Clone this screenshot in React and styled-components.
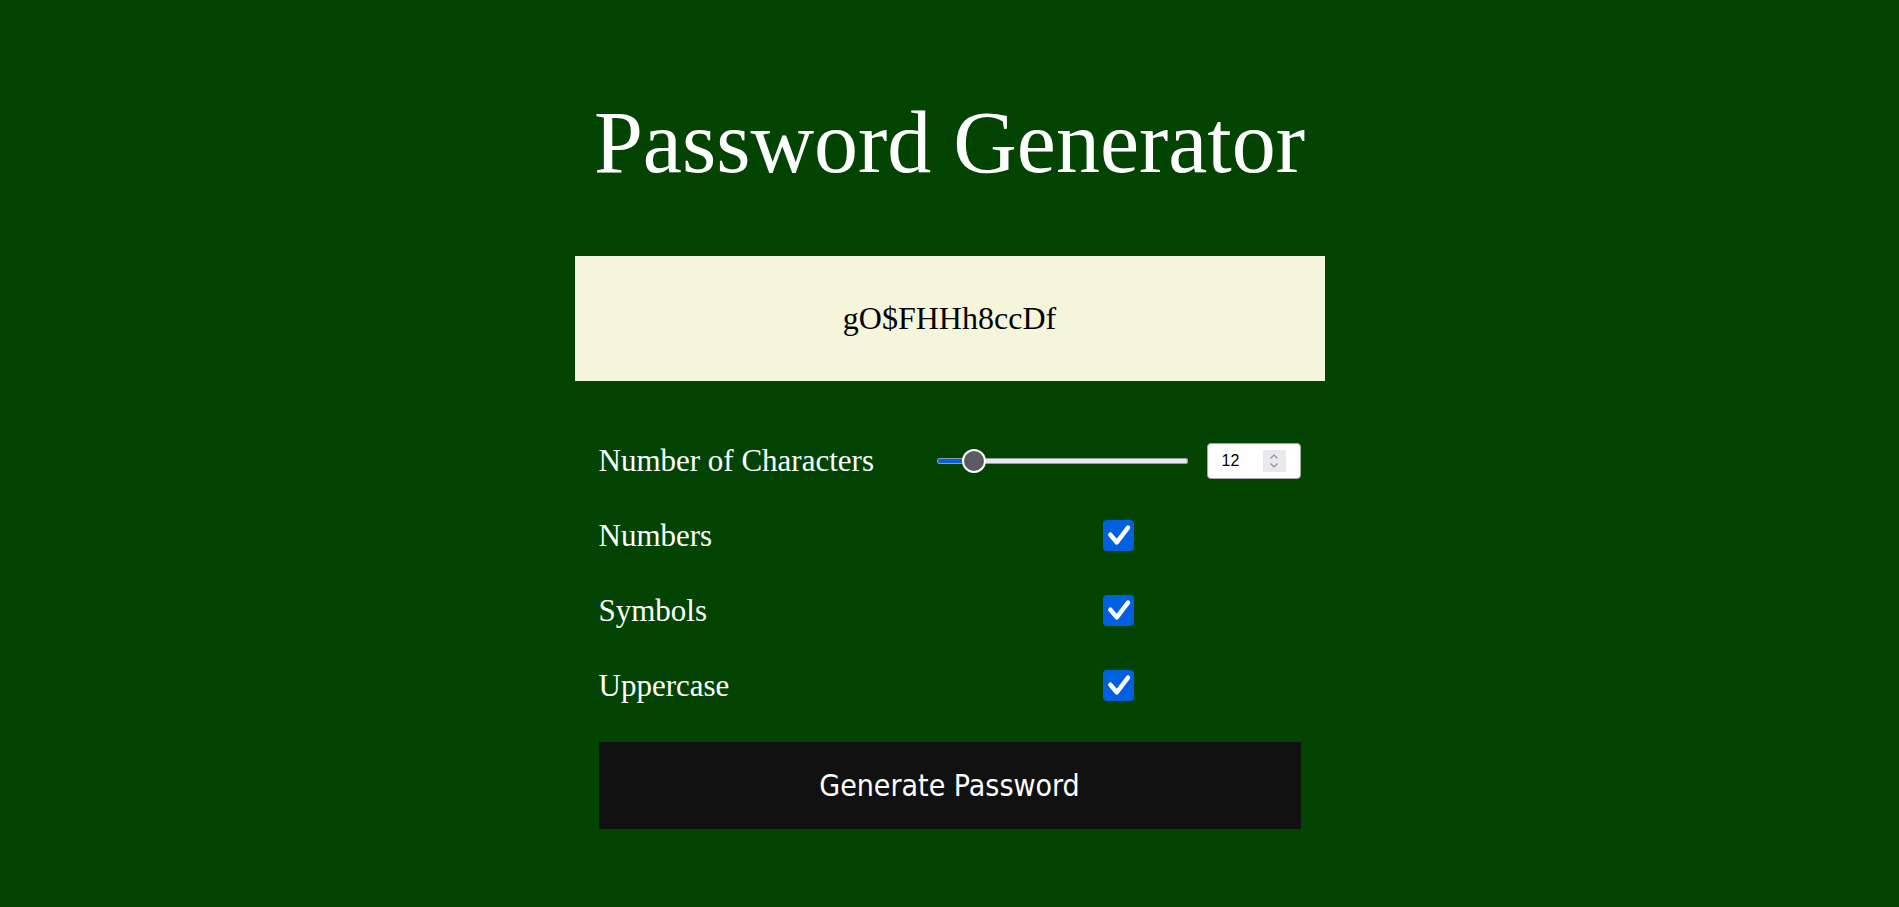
import React, { useState } from 'react';
import styled, { createGlobalStyle } from 'styled-components';

const GlobalStyle = createGlobalStyle`
  html, body {
    margin: 0;
    padding: 0;
  }
  body {
    background: #034403;
    color: #fff;
    font-family: "Liberation Serif", "Times New Roman", serif;
  }
`;

const Page = styled.main`
  min-height: 100vh;
  box-sizing: border-box;
  padding-top: 92px;
  display: flex;
  flex-direction: column;
  align-items: center;
`;

const Title = styled.h1`
  margin: 0;
  font-size: 88px;
  font-weight: 400;
  line-height: 1.15;
  color: #fff;
`;

const Card = styled.section`
  width: 750px;
  margin-top: 63px;
`;

const Output = styled.div`
  height: 125px;
  background: #f5f5dc;
  color: #000;
  font-size: 32px;
  display: flex;
  align-items: center;
  justify-content: center;
`;

const Settings = styled.div`
  margin-top: 57px;
  padding: 0 24px;
  display: flex;
  flex-direction: column;
  gap: 30px;
`;

const Row = styled.div`
  display: grid;
  grid-template-columns: 1fr 364px;
  align-items: center;
  height: 45px;
`;

const Label = styled.span`
  font-size: 31px;
  color: #fff;
`;

const LengthControls = styled.div`
  display: flex;
  align-items: center;
  justify-content: space-between;
`;

const Range = styled.input.attrs({ type: 'range' })`
  -webkit-appearance: none;
  appearance: none;
  width: 251px;
  height: 24px;
  margin: 0;
  background: transparent;

  &::-webkit-slider-runnable-track {
    height: 6px;
    border-radius: 3px;
    box-shadow: inset 0 0 0 1px #9a9aa4;
    background: linear-gradient(
      to right,
      #0060df 0,
      #0060df ${(p) => p.$fill}%,
      #e9e9ed ${(p) => p.$fill}%,
      #e9e9ed 100%
    );
  }

  &::-webkit-slider-thumb {
    -webkit-appearance: none;
    box-sizing: border-box;
    width: 24px;
    height: 24px;
    margin-top: -9px;
    border-radius: 50%;
    background: #5b5b66;
    border: 2px solid #fff;
  }
`;

const NumberBox = styled.div`
  box-sizing: border-box;
  width: 94px;
  height: 36px;
  padding: 0 14px;
  background: #fff;
  border: 1px solid #a6a6ae;
  border-radius: 4px;
  display: flex;
  align-items: center;
`;

const NumberInput = styled.input.attrs({ type: 'number' })`
  flex: 1;
  min-width: 0;
  padding: 0;
  border: none;
  outline: none;
  background: transparent;
  color: #000;
  font: 16px "Liberation Sans", Arial, sans-serif;
  -moz-appearance: textfield;

  &::-webkit-inner-spin-button,
  &::-webkit-outer-spin-button {
    -webkit-appearance: none;
    margin: 0;
  }
`;

const Spin = styled.span`
  width: 23px;
  height: 22px;
  background: #e9e9ed;
  display: flex;
  align-items: center;
  justify-content: center;
`;

const CheckLabel = styled.label`
  justify-self: center;
  display: flex;
  cursor: pointer;
`;

const HiddenCheck = styled.input.attrs({ type: 'checkbox' })`
  position: absolute;
  opacity: 0;
  width: 0;
  height: 0;
  margin: 0;
`;

const CheckBox = styled.span`
  width: 31px;
  height: 31px;
  border-radius: 4px;
  background: ${(p) => (p.$on ? '#0060df' : '#fff')};
  border: ${(p) => (p.$on ? 'none' : '2px solid #8f8f9d')};
  box-sizing: border-box;
  display: flex;
  align-items: center;
  justify-content: center;
`;

const GenerateButton = styled.button`
  display: block;
  width: 702px;
  height: 87px;
  margin: 34px 24px 0;
  border: none;
  background: #111;
  color: #fff;
  font-family: "DejaVu Sans Condensed", "DejaVu Sans", sans-serif;
  font-stretch: condensed;
  font-size: 30px;
  cursor: pointer;
`;

const Toggle = ({ checked, onChange }) => (
  <CheckLabel>
    <HiddenCheck checked={checked} onChange={onChange} />
    <CheckBox $on={checked}>
      {checked && (
        <svg width="31" height="31" viewBox="0 0 16 16">
          <path
            d="M3.8 7.6 L7.1 11.5 L12.9 3.9"
            fill="none"
            stroke="#fff"
            strokeWidth="2.3"
            strokeLinecap="round"
            strokeLinejoin="round"
          />
        </svg>
      )}
    </CheckBox>
  </CheckLabel>
);

const SpinArrows = () => (
  <Spin>
    <svg width="12" height="18" viewBox="0 0 12 18">
      <path d="M2.5 6.5 L6 3 L9.5 6.5" fill="none" stroke="#8f8f9d" strokeWidth="1.2" />
      <path d="M2.5 11.5 L6 15 L9.5 11.5" fill="none" stroke="#8f8f9d" strokeWidth="1.2" />
    </svg>
  </Spin>
);

const MIN = 1;
const MAX = 100;
const THUMB = 24;
const TRACK = 251;

const App = () => {
  const [length, setLength] = useState(12);
  const [numbers, setNumbers] = useState(true);
  const [symbols, setSymbols] = useState(true);
  const [upper, setUpper] = useState(true);
  const [password] = useState('gO$FHHh8ccDf');

  const frac = (length - MIN) / (MAX - MIN);
  const fill = ((THUMB / 2 + frac * (TRACK - THUMB)) / TRACK) * 100;

  return (
    <>
      <GlobalStyle />
      <Page>
        <Title>Password Generator</Title>
        <Card>
          <Output>{password}</Output>
          <Settings>
            <Row>
              <Label>Number of Characters</Label>
              <LengthControls>
                <Range
                  min={MIN}
                  max={MAX}
                  value={length}
                  $fill={fill}
                  onChange={(e) => setLength(Number(e.target.value))}
                />
                <NumberBox>
                  <NumberInput
                    min={MIN}
                    max={MAX}
                    value={length}
                    onChange={(e) => setLength(Number(e.target.value))}
                  />
                  <SpinArrows />
                </NumberBox>
              </LengthControls>
            </Row>
            <Row>
              <Label>Numbers</Label>
              <Toggle checked={numbers} onChange={() => setNumbers(!numbers)} />
            </Row>
            <Row>
              <Label>Symbols</Label>
              <Toggle checked={symbols} onChange={() => setSymbols(!symbols)} />
            </Row>
            <Row>
              <Label>Uppercase</Label>
              <Toggle checked={upper} onChange={() => setUpper(!upper)} />
            </Row>
          </Settings>
          <GenerateButton>Generate Password</GenerateButton>
        </Card>
      </Page>
    </>
  );
};

export default App;
